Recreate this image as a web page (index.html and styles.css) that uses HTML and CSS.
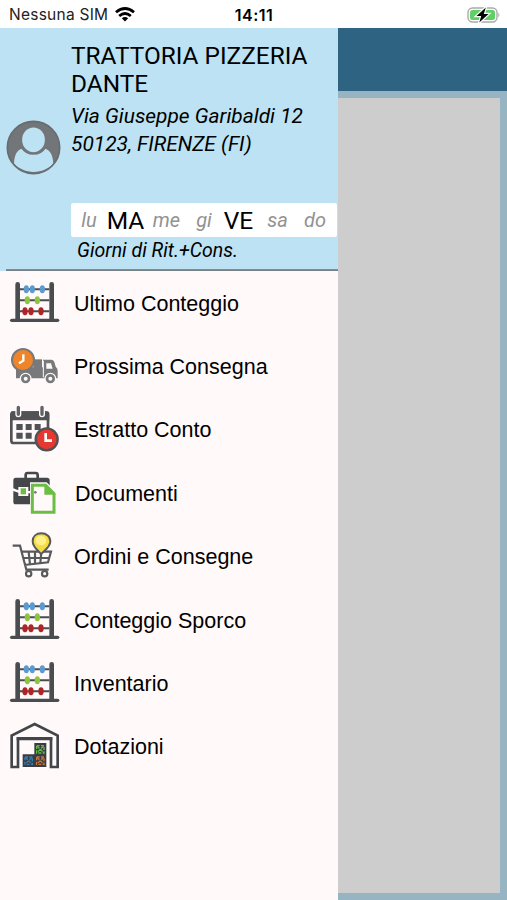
FILE: index.html
```html
<!DOCTYPE html>
<html lang="it">
<head>
<meta charset="utf-8">
<title>Trattoria Pizzeria Dante</title>
<link rel="stylesheet" href="styles.css">
</head>
<body>
<svg width="0" height="0" class="defs">
  <symbol id="abacus" viewBox="0 3 192 180">
    <g fill="none" stroke="#4a4d50">
      <path d="M60 49H148M60 82H148M60 115H148" stroke-width="6"/>
      <path d="M53 34V140M155 34V140" stroke-width="14" stroke-linecap="round"/>
      <path d="M35 142H173" stroke-width="10" stroke-linecap="round"/>
    </g>
    <g fill="#5b9bd0"><ellipse cx="79" cy="49" rx="8" ry="12"/><ellipse cx="97" cy="49" rx="8" ry="12"/><ellipse cx="127" cy="49" rx="8" ry="12"/></g>
    <g fill="#8cc63f"><ellipse cx="82" cy="82" rx="8" ry="12"/><ellipse cx="112" cy="82" rx="8" ry="12"/></g>
    <g fill="#b02426"><ellipse cx="75" cy="115" rx="8" ry="12"/><ellipse cx="93" cy="115" rx="8" ry="12"/><ellipse cx="123" cy="115" rx="8" ry="12"/></g>
  </symbol>
</svg>
<header class="status">
  <div class="carrier">
    <span>Nessuna SIM</span>
    <svg class="wifi" viewBox="0 0 20 15"><g fill="none" stroke="#000" stroke-width="2.8"><path d="M1 5.3Q10-2.3 19 5.3"/><path d="M4.2 9Q10 4 15.8 9"/></g><path d="M6.8 11.2Q10 8.8 13.2 11.2L10 14.5Z"/></svg>
  </div>
  <div class="time">14:11</div>
  <svg class="battery" viewBox="0 0 34 18">
    <rect x="1" y="2" width="29" height="14" rx="4.5" fill="#fff" stroke="#aaa" stroke-width="1.4"/>
    <rect x="3" y="4" width="25" height="10" rx="2.5" fill="#61ce68"/>
    <path d="M31.3 6.5Q33.5 9 31.3 11.5Z" fill="#aaa"/>
    <path d="M18.8 1.5L9.5 10H14.2L12.3 16.5L21.5 8H16.8Z" fill="#000" stroke="#fff" stroke-width="2.4" paint-order="stroke"/>
  </svg>
</header>
<main class="screen">
  <aside class="drawer">
    <section class="profile">
      <svg class="avatar" viewBox="0 0 164 164">
        <circle cx="82" cy="82" r="78" fill="#737679"/>
        <path d="M24 130C25 106 32 90 47 86C62 107 101 107 117 86C132 90 140 106 141 130C112 163 54 163 24 130Z" fill="#bce2f3"/>
        <ellipse cx="82" cy="59" rx="34" ry="37" fill="#bce2f3"/>
        <path d="M48 82C62 107 102 107 116 82" fill="none" stroke="#737679" stroke-width="6"/>
        <circle cx="82" cy="82" r="78" fill="none" stroke="#686c6f" stroke-width="5"/>
      </svg>
      <div class="details">
        <h1>TRATTORIA PIZZERIA<br>DANTE</h1>
        <address>Via Giuseppe Garibaldi 12<br>50123, FIRENZE (FI)</address>
        <div class="days"><i>lu</i><b>MA</b><i>me</i><i>gi</i><b>VE</b><i>sa</i><i>do</i></div>
        <p class="caption">Giorni di Rit.+Cons.</p>
      </div>
    </section>
    <nav class="menu">
      <a><svg><use href="#abacus"/></svg><span>Ultimo Conteggio</span></a>
      <a><svg viewBox="0 1 192 180">
        <path d="M48 92H129V69H154Q160 69 163 76L167 90Q173 94 173 102V125H48Z" fill="#77797b"/>
        <path d="M100 68H126V105H100Z" fill="#77797b"/>
        <path d="M130 72V122" stroke="#fff9f9" stroke-width="3"/>
        <path d="M139 80H153L158 96H139Z" fill="#fff9f9"/>
        <g fill="#77797b" stroke="#fff9f9" stroke-width="4"><circle cx="77" cy="126" r="16"/><circle cx="151" cy="126" r="16"/></g>
        <g fill="#fff9f9"><circle cx="77" cy="126" r="6"/><circle cx="151" cy="126" r="6"/></g>
        <circle cx="69" cy="70" r="33" fill="#ef8429" stroke="#77797b" stroke-width="6"/>
        <path d="M70 53V72L57 80" fill="none" stroke="#fff" stroke-width="7"/>
      </svg><span>Prossima Consegna</span></a>
      <a><svg viewBox="0 5 192 180">
        <rect x="34" y="43" width="110" height="91" rx="7" fill="#fff9f9" stroke="#505255" stroke-width="8"/>
        <path d="M32 43Q32 39 38 39H140Q148 39 148 46V66H32Z" fill="#505255"/>
        <g stroke-linecap="round"><path d="M55 27V48M126 27V48" stroke="#fff9f9" stroke-width="18"/><path d="M55 27V48M126 27V48" stroke="#606265" stroke-width="10"/></g>
        <path d="M49 77H68V95H49ZM77 77H95V95H77ZM104 77H122V95H104ZM49 103H68V121H49ZM77 103H95V121H77Z" fill="#505255"/>
        <circle cx="140" cy="123" r="33" fill="#e63731" stroke="#505255" stroke-width="7"/>
        <path d="M137 104V127H156" fill="none" stroke="#fff" stroke-width="8"/>
      </svg><span>Estratto Conto</span></a>
      <a><svg viewBox="0 3 192 180">
        <path d="M77 46V36Q77 30 83 30H107Q113 30 113 36V46" fill="none" stroke="#45484b" stroke-width="8"/>
        <path d="M47 44H141Q149 44 149 52V76Q125 86 85 84V72H55V82L40 76V52Q40 44 47 44ZM40 84L55 89V99H85V91H100V124H47Q40 124 40 116Z" fill="#45484b"/>
        <rect x="62" y="76" width="16" height="18" fill="#6bbd45"/>
        <path d="M97 65H137L163 91V149H97Z" fill="#fff9f9" stroke="#fff9f9" stroke-width="14"/>
        <path d="M97 67H137L162 92V148H97Z" fill="#fff9f9" stroke="#6bbd45" stroke-width="9"/>
        <path d="M135 66V93H163Z" fill="#6bbd45" stroke="#6bbd45" stroke-width="4"/>
        <circle cx="106" cy="88" r="4" fill="#777"/>
      </svg><span class="indented">Documenti</span></a>
      <a><svg viewBox="0 5 192 180">
        <g fill="none" stroke="#57595b" stroke-width="6.5">
          <path d="M38 61H60L79 133H146M67 79H153L144 111L73 119M72 98H148M86 80L90 117M105 80V115M124 80L121 113"/>
          <circle cx="86" cy="145" r="8"/><circle cx="134" cy="145" r="8"/>
        </g>
        <path d="M123 87C119 78 98 68 98 48C98 33 109 24 124 24S151 33 151 48C151 68 128 78 123 87Z" fill="#f5dc47" stroke="#57595b" stroke-width="6"/>
        <ellipse cx="123" cy="46" rx="16" ry="14" fill="#fff08a"/>
      </svg><span>Ordini e Consegne</span></a>
      <a><svg><use href="#abacus"/></svg><span>Conteggio Sporco</span></a>
      <a><svg><use href="#abacus"/></svg><span>Inventario</span></a>
      <a><svg viewBox="0 5 192 180">
        <path d="M35 155V61L104 26L173 61V155H153V70H54V155Z" fill="#fff9f9" stroke="#424549" stroke-width="8"/>
        <path d="M50 70H157" stroke="#424549" stroke-width="10"/>
        <path d="M103 83H139V155H68V117H103Z" fill="#393d43"/>
        <g fill="none" stroke-width="4" stroke-dasharray="9 4"><g stroke="#61bd49"><rect x="110" y="91" width="22" height="22"/><path d="M112 93L130 111M130 93L112 111"/></g><g stroke="#367fb2"><rect x="75" y="125" width="22" height="22"/><path d="M77 127L95 145M95 127L77 145"/></g><g stroke="#c7773e"><rect x="110" y="125" width="22" height="22"/><path d="M112 127L130 145M130 127L112 145"/></g></g>
      </svg><span>Dotazioni</span></a>
    </nav>
  </aside>
  <section class="page"><div class="toolbar"></div><div class="canvas"></div></section>
</main>
</body>
</html>
```
FILE: styles.css
```css
* { box-sizing: border-box; }
body { margin: 0; width: 507px; height: 900px; overflow: hidden; background: #fff; color: #000; font-family: Roboto, "Liberation Sans", sans-serif; }
.defs { display: none; }
.status { height: 28px; display: grid; grid-template-columns: 1fr 60px 1fr; align-items: center; padding: 1px 6px 0 9px; font-family: Inter, "Liberation Sans", sans-serif; }
.carrier { display: flex; align-items: center; gap: 7px; font-size: 15.5px; letter-spacing: .25px; color: #222; white-space: nowrap; }
.wifi { width: 20px; height: 15px; }
.time { font-size: 16px; font-weight: 600; letter-spacing: .5px; text-align: center; white-space: nowrap; margin-left: -2px; }
.battery { width: 34px; height: 18px; justify-self: end; }
.screen { display: flex; height: 872px; }
.drawer { width: 338px; background: #fff9f9; }
.profile { height: 243px; padding-left: 6px; display: flex; gap: 10px; align-items: flex-start; background: linear-gradient(#8a9296, #737b7f) 6px 100% / 100% 2px no-repeat, #bce2f3; }
.avatar { width: 55px; height: 55px; margin-top: 92px; flex: none; }
.details { width: 266px; padding-top: 14px; }
h1 { margin: 0; font-size: 24.4px; font-weight: 400; line-height: 28px; white-space: nowrap; }
address { margin-top: 4px; font-size: 20.9px; line-height: 28px; white-space: nowrap; }
.days { height: 34px; margin-top: 45px; display: grid; grid-template-columns: 36px 37px 45px 30px 39px 39px 36px; align-items: center; justify-items: center; background: #fff; border-radius: 2px; }
.days i { font-size: 20px; color: #929292; }
.days b { font-size: 24.5px; font-weight: 400; }
.caption { margin: 2px 0 0 6px; font-size: 19.5px; line-height: 24px; font-style: italic; }
.menu a { height: 63.4px; display: flex; align-items: center; gap: 10px; }
.menu svg { width: 64px; height: 60px; flex: none; position: relative; top: 1px; }
.menu span { padding-top: 2px; font-family: "Liberation Sans", sans-serif; font-size: 21.5px; line-height: 26px; white-space: nowrap; }
.menu .indented { padding-left: 1px; }
.page { flex: 1; display: flex; flex-direction: column; background: #96b4c1; }
.toolbar { height: 63px; background: #2e6482; }
.canvas { flex: 1; margin: 7px 7px 7px 0; background: #cdcdcd; }
```
